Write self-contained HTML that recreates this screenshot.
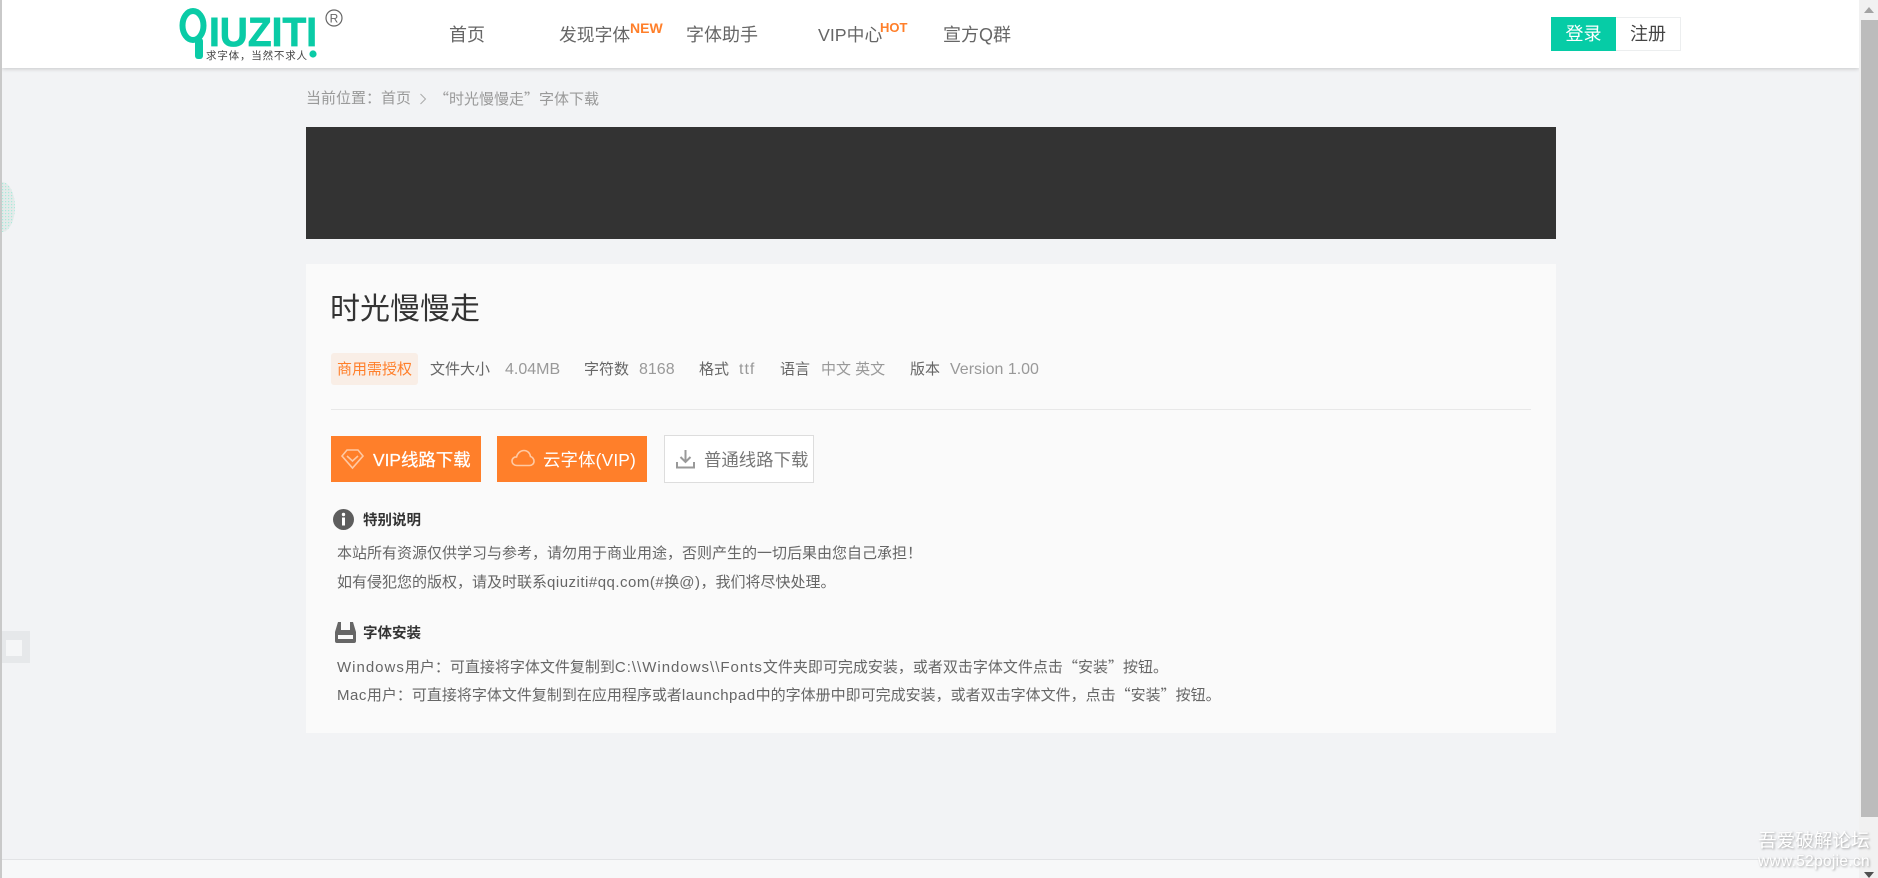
<!DOCTYPE html>
<html lang="zh-CN">
<head>
<meta charset="utf-8">
<title>时光慢慢走 字体下载</title>
<style>
html,body{margin:0;padding:0;width:1878px;height:878px;overflow:hidden;background:#f2f3f5;}
body{position:relative;font-family:"Liberation Sans","Noto Sans CJK SC",sans-serif;color:#666;}
.a{position:absolute;}
.t{position:absolute;white-space:nowrap;height:24px;line-height:24px;}
.nav{font-size:18px;color:#666;}
.sup{font-size:14px;font-weight:bold;color:#ff7f2a;}
.m{font-size:15px;color:#666;}
.v{font-size:16px;color:#999;}
.v2{font-size:15px;color:#999;}
.p{font-size:15px;color:#666;}
.h{font-size:14.5px;font-weight:bold;color:#333;}
.b{font-size:17.4px;color:#fff;}
.q{font-family:"Noto Sans CJK SC",sans-serif;}
.l1{letter-spacing:1px;}
.l5{letter-spacing:.5px;}
</style>
</head>
<body>
<!-- left edge -->
<div class="a" style="left:0;top:0;width:2px;height:878px;background:#c9c9c9;z-index:5"></div>
<!-- header -->
<div class="a" style="left:2px;top:0;width:1857px;height:68px;background:#fff;box-shadow:0 1px 4px rgba(0,0,0,.18);z-index:2"></div>
<div class="a" style="left:0;top:0;width:1878px;height:70px;z-index:3">
  <svg class="a" style="left:170px;top:0" width="190" height="70" viewBox="170 0 190 70">
    <ellipse cx="193" cy="25.500" rx="10.500" ry="14.500" fill="none" stroke="#0acba6" stroke-width="6"/>
    <rect x="195" y="38" width="8" height="21" rx="3" fill="#0acba6"/>
    <text x="209" y="46" font-family="Liberation Sans" font-weight="bold" font-size="41" fill="#0acba6" stroke="#0acba6" stroke-width=".8" textLength="108" lengthAdjust="spacingAndGlyphs">IUZITI</text>
    <text x="206" y="59" font-family="Noto Sans CJK SC" font-size="10.500" fill="#444" textLength="101">求字体，当然不求人</text>
    <circle cx="313" cy="54" r="3.600" fill="#0acba6"/>
    <circle cx="334" cy="18" r="8" fill="none" stroke="#666" stroke-width="1.200"/>
    <text x="334" y="22.500" text-anchor="middle" font-family="Liberation Sans" font-size="12" fill="#666">R</text>
  </svg>
  <span class="t nav" style="left:559px;top:23px;font-size:17.800px">发现字体</span>
  <span class="t nav" style="left:449px;top:23px">首页</span>
  <span class="t sup" style="left:630px;top:16px">NEW</span>
  <span class="t nav" style="left:686px;top:23px">字体助手</span>
  <span class="t nav" style="left:818px;top:23px;font-size:17.800px">VIP中心</span>
  <span class="t sup" style="left:880px;top:16px;font-size:13px">HOT</span>
  <span class="t nav" style="left:943px;top:23px">宣方Q群</span>
  <div class="a" style="left:1551px;top:17px;width:65px;height:34px;background:#06cca6;color:#fff;font-size:18px;line-height:35px;text-align:center">登录</div>
  <div class="a" style="left:1616px;top:17px;width:64px;height:32px;border:1px solid #eceeef;border-left:0;background:#fff;color:#444;font-size:18px;line-height:33px;text-align:center">注册</div>
</div>

<!-- scrollbar -->
<div class="a" style="left:1859px;top:0;width:19px;height:878px;background:#f1f1f1;z-index:4"></div>
<div class="a" style="left:1861px;top:20px;width:17px;height:797px;background:#bcbcbc;z-index:5"></div>
<svg class="a" style="left:1864px;top:7px;z-index:5" width="10" height="7"><path d="M5 0L10 6H0Z" fill="#a3a3a3"/></svg>
<svg class="a" style="left:1864px;top:872px;z-index:5" width="10" height="6"><path d="M0 0H10L5 6Z" fill="#505050"/></svg>

<!-- left widgets -->
<svg class="a" style="left:2px;top:180px;z-index:1" width="14" height="56">
  <defs><pattern id="d" width="3" height="3" patternUnits="userSpaceOnUse"><rect width="3" height="3" fill="#e4eae9"/><rect width="1.200" height="1.200" fill="#a8ebdc"/></pattern></defs>
  <ellipse cx="0" cy="27" rx="13" ry="25" fill="url(#d)"/>
</svg>
<div class="a" style="left:2px;top:631px;width:28px;height:32px;background:#e6e8ea"></div>
<div class="a" style="left:6px;top:640px;width:16px;height:16px;background:#f5f6f7"></div>

<!-- breadcrumb -->
<span class="t" style="left:306px;top:87px;font-size:15px;color:#999">当前位置：首页</span>
<svg class="a" style="left:419px;top:93px" width="8" height="12"><path d="M1.500 1L6.500 6L1.500 11" fill="none" stroke="#aaa" stroke-width="1"/></svg>
<span class="t q" style="left:434px;top:87px;font-size:15px;color:#999">“时光慢慢走”字体下载</span>

<!-- banner -->
<div class="a" style="left:306px;top:127px;width:1250px;height:112px;background:#333"></div>

<!-- card -->
<div class="a" style="left:306px;top:264px;width:1250px;height:469px;background:#fafafa"></div>

<span class="t" style="left:330px;top:293px;height:34px;line-height:34px;font-size:30px;color:#333">时光慢慢走</span>

<div class="a" style="left:331px;top:353px;width:87px;height:32px;background:#f9eee6;border-radius:3px"></div>
<span class="t" style="left:337px;top:358px;font-size:15px;color:#ff7f2a">商用需授权</span>
<span class="t m" style="left:430px;top:358px">文件大小</span>
<span class="t v" style="left:505px;top:358px">4.04MB</span>
<span class="t m" style="left:584px;top:358px">字符数</span>
<span class="t v" style="left:639px;top:358px">8168</span>
<span class="t m" style="left:699px;top:358px">格式</span>
<span class="t v" style="left:739px;top:358px;letter-spacing:1px">ttf</span>
<span class="t m" style="left:780px;top:358px">语言</span>
<span class="t v2" style="left:821px;top:358px">中文 英文</span>
<span class="t m" style="left:910px;top:358px">版本</span>
<span class="t v" style="left:950px;top:358px">Version 1.00</span>

<div class="a" style="left:331px;top:409px;width:1200px;height:1px;background:#e8e8e8"></div>

<!-- buttons -->
<div class="a" style="left:331px;top:436px;width:150px;height:46px;background:#ff7f2a"></div>
<svg class="a" style="left:341px;top:448px" width="23" height="22" viewBox="0 0 23 22" fill="none" stroke="#ffc9a3" stroke-width="1.600">
  <path d="M6 2H17L22 8L11.500 20L1 8Z"/><path d="M6 8L11.500 13L17 8"/>
</svg>
<span class="t b" style="left:373px;top:448px;-webkit-text-stroke:.25px #fff">VIP线路下载</span>
<div class="a" style="left:497px;top:436px;width:150px;height:46px;background:#ff7f2a"></div>
<svg class="a" style="left:511px;top:449px" width="24" height="18" viewBox="0 0 24 18" fill="none" stroke="#ffc9a3" stroke-width="1.600">
  <path d="M6 16.500C3 16.500 1 14.500 1 12C1 9.500 3 7.800 5.500 8C6.500 4 9.500 1.500 13 1.500C16.500 1.500 19 4 19.500 7.500C21.500 8 23 10 23 12.300C23 14.800 21 16.500 18.500 16.500Z"/>
</svg>
<span class="t b" style="left:543px;top:448px;letter-spacing:.15px">云字体(VIP)</span>
<div class="a" style="left:664px;top:435px;width:148px;height:46px;border:1px solid #ddd;background:#fff"></div>
<svg class="a" style="left:675px;top:449px" width="21" height="20" viewBox="0 0 21 20" fill="none" stroke="#999" stroke-width="2">
  <path d="M10.500 1V12M5.500 8L10.500 13L15.500 8"/><path d="M2 13V18.500H19V13"/>
</svg>
<span class="t b" style="left:704px;top:448px;color:#777">普通线路下载</span>

<!-- notes -->
<svg class="a" style="left:333px;top:509px" width="21" height="21" viewBox="0 0 21 21">
  <circle cx="10.500" cy="10.500" r="10.500" fill="#5d5d5d"/>
  <circle cx="10.500" cy="5.500" r="1.700" fill="#fff"/>
  <rect x="9" y="8.500" width="3" height="8" fill="#fff"/>
</svg>
<span class="t h" style="left:363px;top:509px">特别说明</span>
<span class="t p" style="left:337px;top:542px">本站所有资源仅供学习与参考，请勿用于商业用途，否则产生的一切后果由您自己承担！</span>
<span class="t p" style="left:337px;top:571px">如有侵犯您的版权，请及时联系<span class="l5">qiuziti#qq.com(#</span>换<span class="l5">@)</span>，我们将尽快处理。</span>

<svg class="a" style="left:335px;top:622px" width="21" height="21" viewBox="0 0 21 21">
  <path d="M3 0H6V8H15V0H18L21 10V19Q21 21 19 21H2Q0 21 0 19V10Z" fill="#666"/>
  <rect x="3" y="13" width="15" height="4" fill="#fafafa"/>
</svg>
<span class="t h" style="left:363px;top:622px">字体安装</span>
<span class="t p" style="left:337px;top:655px"><span class="l1">Windows</span>用户：可直接将字体文件复制到<span class="l1">C:\\Windows\\Fonts</span>文件夹即可完成安装，或者双击字体文件点击<span class="q">“安装”</span>按钮。</span>
<span class="t p" style="left:337px;top:683px"><span class="l5">Mac</span>用户：可直接将字体文件复制到在应用程序或者<span class="l5">launchpad</span>中的字体册中即可完成安装，或者双击字体文件，点击<span class="q">“安装”</span>按钮。</span>

<!-- footer -->
<div class="a" style="left:2px;top:859px;width:1857px;height:19px;background:#f7f8f9;border-top:1px solid #e2e3e5;box-sizing:border-box"></div>

<!-- watermark -->
<span class="t" style="left:1758px;top:829px;font-size:18.600px;color:#fff;text-shadow:1px 1px 2px rgba(0,0,0,.35);z-index:6">吾爱破解论坛</span>
<span class="t" style="left:1758px;top:850px;font-size:15.500px;color:#fff;text-shadow:1px 1px 2px rgba(0,0,0,.35);z-index:6;letter-spacing:.3px">www.52pojie.cn</span>
</body>
</html>
